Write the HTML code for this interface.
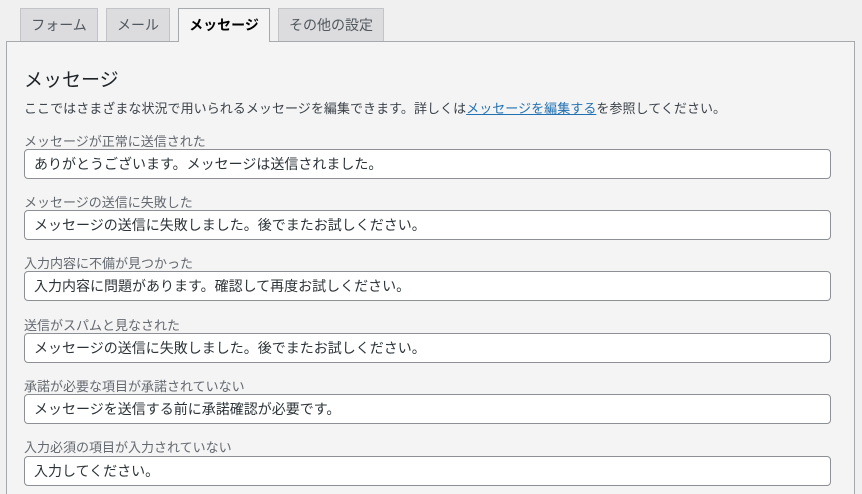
<!DOCTYPE html>
<html style="width:862px;height:494px;overflow:hidden"><head><meta charset="utf-8"><style>
*{box-sizing:border-box;margin:0;padding:0}
body{width:862px;height:494px;overflow:hidden;background:#f0f0f1;font-family:"Liberation Sans","Noto Sans CJK JP",sans-serif;color:#3c434a;position:relative}
.tab{position:absolute;top:8px;height:33px;border:1px solid #c3c4c7;border-bottom:none;background:#dcdcde;font-size:14px;line-height:32px;text-align:center;color:#50575e}
.tab.act{background:#f4f4f4;border-color:#a7aaad;height:34px;color:#000;font-weight:bold;z-index:2}
.panel{position:absolute;left:6px;top:41px;width:849px;height:453px;background:#f4f4f4;border:1px solid #a7aaad;border-bottom:none}
h2{position:absolute;left:24px;top:65px;font-size:19px;font-weight:normal;color:#1d2327}
.desc{position:absolute;left:24px;top:98px;font-size:13px;letter-spacing:0.05px;color:#3c434a}
.desc a{color:#2271b1;text-decoration:underline}
.lab{position:absolute;left:24px;font-size:13px;color:#646970}
.inp{position:absolute;left:24px;width:807px;height:30px;background:#fff;border:1px solid #8c8f94;border-radius:4px;font-size:14px;line-height:28px;padding-left:9px;color:#2c3338}
</style></head><body>
<div class="tab" style="left:20px;width:78px">フォーム</div>
<div class="tab" style="left:106px;width:64px">メール</div>
<div class="tab act" style="left:178px;width:92px">メッセージ</div>
<div class="tab" style="left:278px;width:106px">その他の設定</div>
<div class="panel"></div>
<h2>メッセージ</h2>
<div class="desc">ここではさまざまな状況で用いられるメッセージを編集できます。詳しくは<a>メッセージを編集する</a>を参照してください。</div>
<div class="lab" style="top:131px">メッセージが正常に送信された</div>
<div class="inp" style="top:149px">ありがとうございます。メッセージは送信されました。</div>
<div class="lab" style="top:192px">メッセージの送信に失敗した</div>
<div class="inp" style="top:210px">メッセージの送信に失敗しました。後でまたお試しください。</div>
<div class="lab" style="top:253px">入力内容に不備が見つかった</div>
<div class="inp" style="top:271px">入力内容に問題があります。確認して再度お試しください。</div>
<div class="lab" style="top:315px">送信がスパムと見なされた</div>
<div class="inp" style="top:333px">メッセージの送信に失敗しました。後でまたお試しください。</div>
<div class="lab" style="top:376px">承諾が必要な項目が承諾されていない</div>
<div class="inp" style="top:394px">メッセージを送信する前に承諾確認が必要です。</div>
<div class="lab" style="top:437px">入力必須の項目が入力されていない</div>
<div class="inp" style="top:456px">入力してください。</div>
</body></html>
